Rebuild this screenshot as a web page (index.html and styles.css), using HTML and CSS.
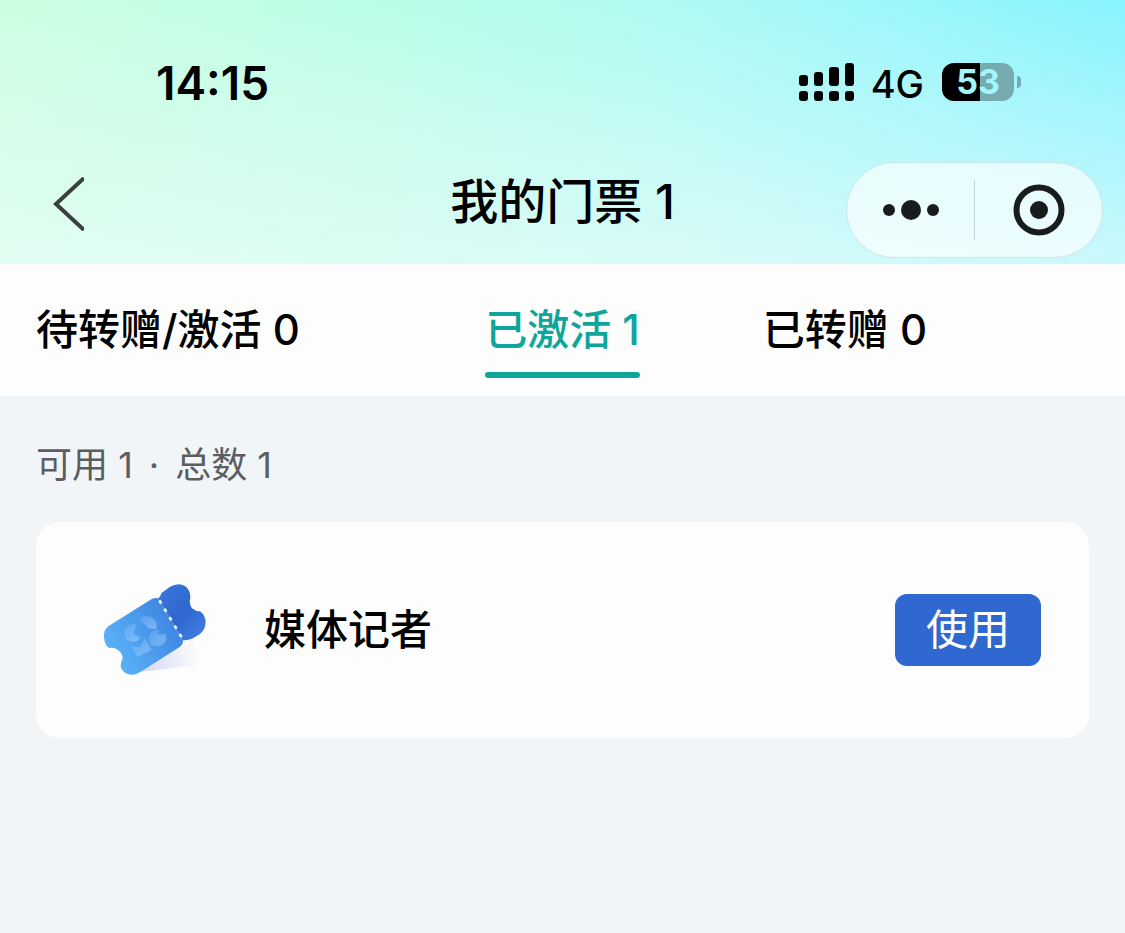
FILE: index.html
```html
<!DOCTYPE html>
<html lang="zh-CN">
<head>
    <meta charset="UTF-8">
    <meta name="viewport" content="width=device-width, initial-scale=1.0">
    <title>我的门票</title>
    <link rel="stylesheet" href="styles.css">
</head>
<body>

    <header class="header">
        <div class="status-bar">
            <span class="time">14:15</span>
            <div class="status-icons">
                <svg class="signal" viewBox="0 0 56 38" aria-hidden="true">
                    <rect x="1" y="12" width="9" height="11" rx="3"/>
                    <rect x="16" y="9" width="9" height="14" rx="3"/>
                    <rect x="31" y="4" width="10" height="19" rx="3"/>
                    <rect x="47" y="0" width="9" height="23" rx="3"/>
                    <rect x="1" y="28" width="9" height="10" rx="3"/>
                    <rect x="16" y="28" width="9" height="10" rx="3"/>
                    <rect x="31" y="28" width="10" height="10" rx="3"/>
                    <rect x="47" y="28" width="9" height="10" rx="3"/>
                </svg>
                <span class="network">4G</span>
                <div class="battery">
                    <span class="battery-level">53</span>
                    <span class="battery-tip"></span>
                </div>
            </div>
        </div>

        <div class="nav-bar">
            <button class="back-btn" type="button" aria-label="返回">
                <svg viewBox="0 0 32 54" width="32" height="54">
                    <path d="M32 1 L4 27 L32 53" fill="none" stroke="#3a403e" stroke-width="4"/>
                </svg>
            </button>
            <h1 class="title">我的门票 1</h1>
            <div class="capsule">
                <button class="capsule-btn" type="button" aria-label="更多">
                    <svg viewBox="0 0 56 20" width="56" height="20">
                        <circle cx="6" cy="10" r="6"/>
                        <circle cx="28" cy="10" r="10"/>
                        <circle cx="50" cy="10" r="6"/>
                    </svg>
                </button>
                <button class="capsule-btn" type="button" aria-label="关闭">
                    <svg viewBox="0 0 52 52" width="52" height="52">
                        <circle cx="26" cy="26" r="22.5" fill="none" stroke="#191c1c" stroke-width="6"/>
                        <circle cx="26" cy="26" r="9"/>
                    </svg>
                </button>
            </div>
        </div>
    </header>

    <nav class="tabs">
        <a class="tab" href="#pending">待转赠/激活 0</a>
        <a class="tab active" href="#activated">已激活 1</a>
        <a class="tab" href="#given">已转赠 0</a>
    </nav>

    <main class="content">
        <p class="summary">
            <span>可用 1</span>
            <span>·</span>
            <span>总数 1</span>
        </p>

        <section class="ticket-card">
            <svg class="ticket-icon" viewBox="0 0 390 360" aria-hidden="true">
                <defs>
                    <linearGradient id="bodyFill" x1="60" y1="270" x2="290" y2="130" gradientUnits="userSpaceOnUse">
                        <stop offset="0" stop-color="#5bb5fa"/>
                        <stop offset="1" stop-color="#3b7ddd"/>
                    </linearGradient>
                    <linearGradient id="stubFill" x1="220" y1="80" x2="330" y2="190" gradientUnits="userSpaceOnUse">
                        <stop offset="0" stop-color="#3672d8"/>
                        <stop offset="0.5" stop-color="#2f66cf"/>
                        <stop offset="1" stop-color="#3f7be0"/>
                    </linearGradient>
                    <linearGradient id="shadowFill" x1="140" y1="300" x2="330" y2="250" gradientUnits="userSpaceOnUse">
                        <stop offset="0" stop-color="#d3d5f5"/>
                        <stop offset="1" stop-color="#fdfdfd"/>
                    </linearGradient>
                    <linearGradient id="markFill" x1="0" y1="0" x2="1" y2="1">
                        <stop offset="0" stop-color="#a5d4ff" stop-opacity="0.15"/>
                        <stop offset="1" stop-color="#a5d4ff" stop-opacity="0.55"/>
                    </linearGradient>
                </defs>
                <path d="M130 308 L280 210 L335 200 L330 284 Z" fill="url(#shadowFill)"/>
                <path d="M205 85 Q195 82 184 88 L56 168 Q40 180 42 202 Q44 228 58 234 Q68 232 78 236 Q98 246 98 266 Q90 280 93 293 Q104 316 130 314 Q140 312 152 305 L270 230 Q280 222 279 211 Z" fill="url(#bodyFill)"/>
                <path d="M205 85 Q212 80 214 70 L240 50 Q265 36 285 48 Q303 62 301 84 Q296 100 306 115 Q316 124 330 124 Q348 137 347 160 Q344 182 329 193 L306 206 Q292 211 279 211 Z" fill="url(#stubFill)"/>
                <path d="M208 91 L275 202" fill="none" stroke="#f4faff" stroke-width="8" stroke-dasharray="11 18.5"/>
                <g fill="url(#markFill)">
                    <path d="M139 164 A27 27 0 1 0 151 205 L130 191 Z"/>
                    <path d="M144 145 Q170 130 189 145 Q204 158 198 178 L176 174 Z"/>
                    <path d="M176 207 Q178 180 206 179 L203 192 L227 193 Q234 215 214 226 Q194 233 181 222 Z"/>
                    <path d="M123 229 L149 232 L165 204 L185 239 L142 262 Z"/>
                </g>
            </svg>
            <h2 class="ticket-name">媒体记者</h2>
            <button class="use-btn" type="button">使用</button>
        </section>
    </main>

</body>
</html>
```

FILE: styles.css
```css
* {
    box-sizing: border-box;
}
body {
    margin: 0;
    min-height: 100vh;
    font-family: Inter, "Noto Sans CJK SC", sans-serif;
    background-color: #f2f5f8;
    color: #000;
}
h1, h2, p {
    margin: 0;
}
button {
    border: none;
    padding: 0;
    background: none;
    font-family: inherit;
    cursor: pointer;
}
svg {
    display: block;
}

.header {
    background:
        linear-gradient(to bottom, rgba(240, 252, 250, 0) 0%, rgba(240, 252, 250, 0.3) 45%, rgba(240, 252, 250, 0.65) 100%),
        linear-gradient(100deg, #cbffe0 0%, #bbfde7 32%, #aefaf3 58%, #98f6fb 80%, #84f2ff 100%);
}
.status-bar {
    display: flex;
    justify-content: space-between;
    align-items: center;
    height: 132px;
    padding: 32px 104px 0 156px;
}
.time {
    padding-top: 2px;
    font-size: 46px;
    font-weight: 600;
}
.status-icons {
    display: flex;
    align-items: center;
}
.signal {
    width: 56px;
    height: 38px;
    margin-right: 17px;
}
.network {
    padding-top: 4px;
    font-size: 38px;
    font-weight: 500;
    margin-right: 18px;
}
.battery {
    display: flex;
    align-items: center;
    gap: 3px;
}
.battery-level {
    width: 72px;
    height: 38px;
    border-radius: 12px;
    background: linear-gradient(to right, #000 53%, #76abaf 53%);
    color: #a3f6fc;
    font-size: 34px;
    font-weight: 700;
    line-height: 38px;
    text-align: center;
}
.battery-tip {
    width: 4px;
    height: 12px;
    border-radius: 0 4px 4px 0;
    background: #76abaf;
}

.nav-bar {
    display: grid;
    grid-template-columns: 1fr auto 1fr;
    height: 132px;
    padding: 30px 22px 6px;
}
.back-btn {
    justify-self: start;
    align-self: start;
    padding: 15px 30px;
}
.title {
    font-size: 48px;
    font-weight: 500;
    line-height: 80px;
}
.capsule {
    display: flex;
    justify-self: end;
    align-items: center;
    width: 257px;
    height: 96px;
    border: 1px solid #c9e6e8;
    border-radius: 48px;
    background: rgba(255, 255, 255, 0.65);
}
.capsule-btn {
    display: flex;
    flex: 1;
    align-items: center;
    justify-content: center;
    height: 60px;
    fill: #191c1c;
}
.capsule-btn + .capsule-btn {
    border-left: 1px solid #c3d5d7;
}

.tabs {
    display: grid;
    grid-template-columns: 1fr auto 1fr;
    height: 132px;
    padding: 36px 36px 18px;
    background: #fdfdfd;
}
.tab {
    justify-self: start;
    color: #000;
    font-size: 42px;
    font-weight: 500;
    line-height: 60px;
    text-decoration: none;
}
.tab:last-child {
    margin-left: 123px;
}
.tab.active {
    color: #10a59b;
}
.tab.active::after {
    content: "";
    display: block;
    height: 6px;
    margin-top: 12px;
    border-radius: 3px;
    background: #10a59b;
}

.content {
    padding: 42px 36px;
}
.summary {
    display: flex;
    gap: 16px;
    margin-bottom: 30px;
    color: #5c5d5f;
    font-size: 36px;
    line-height: 54px;
}
.ticket-card {
    display: flex;
    align-items: center;
    height: 216px;
    padding: 0 48px 0 54px;
    border-radius: 24px;
    background: #fdfdfd;
}
.ticket-icon {
    width: 130px;
    height: 120px;
    margin-right: 44px;
}
.ticket-name {
    flex: 1;
    font-size: 42px;
    font-weight: 500;
    line-height: 60px;
}
.use-btn {
    width: 146px;
    height: 72px;
    border-radius: 12px;
    background: #2f68d0;
    color: #fff;
    font-size: 42px;
    line-height: 72px;
}
.use-btn:hover {
    background: #2659b8;
}
```
